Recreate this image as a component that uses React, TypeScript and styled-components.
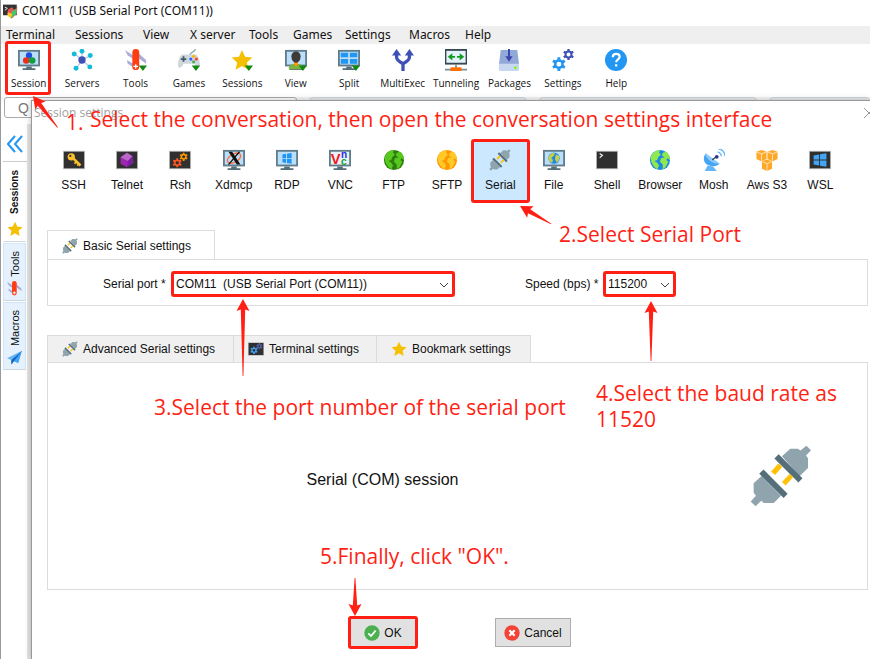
import React from "react";
import styled, { createGlobalStyle, css } from "styled-components";

const RED = "#ff1f14";
const ARIAL = '"Liberation Sans", Arial, sans-serif';
const HUMANIST = '"Noto Sans", "Open Sans", sans-serif';
const OPEN = '"Open Sans", "Noto Sans", sans-serif';

const GlobalStyle = createGlobalStyle`
  *, *::before, *::after { box-sizing: border-box; }
  body { margin: 0; background: #fff; color: #111; font: 12px/16px ${ARIAL}; }
  button, input, select { font: inherit; color: inherit; margin: 0; }
`;

/* ---------- icons ---------- */

type Size = { size?: number };

const Svg = ({ size = 22, box = "0 0 24 24", children }: Size & { box?: string; children: React.ReactNode }) => (
  <svg width={size} height={size} viewBox={box} aria-hidden="true">{children}</svg>
);

const Monitor = ({ children, size, screen = "#bbdefb" }: Size & { children?: React.ReactNode; screen?: string }) => (
  <Svg size={size}>
    <path d="M0 1h24v18H0z" fill="#607d8b" />
    <path d="M2 3h20v14H2z" fill={screen} />
    <path d="M9 19h6v2h4v2H5v-2h4z" fill="#546e7a" />
    {children}
  </Svg>
);

const DarkScreen = ({ children, size }: Size & { children?: React.ReactNode }) => (
  <Svg size={size}>
    <path d="M0 2h24v20H0z" fill="#b8b8b8" />
    <path d="M1 3h22v18H1z" fill="#303030" />
    {children}
  </Svg>
);

const Dropdown = () => <path d="M15 18h9l-4.5 6z" fill="#108a10" />;

const STAR = "M12 1l3.3 7.4 8 .8-6 5.4 1.7 8L12 18.500 5 22.600l1.700-8-6-5.400 8-.8z";
const Star = ({ size, menu }: Size & { menu?: boolean }) => (
  <Svg size={size}><path d={STAR} fill="#f5c000" />{menu && <Dropdown />}</Svg>
);

const gearTeeth = [0, 60, 120];
const Gear = ({ x, y, r, color }: { x: number; y: number; r: number; color: string }) => (
  <g transform={`translate(${x} ${y})`}>
    <circle r={r * 0.54} fill="none" stroke={color} strokeWidth={r * 0.36} />
    {gearTeeth.map((a) => (
      <path key={a} transform={`rotate(${a})`} d={`M0 ${-r}V${-r * 0.62}M0 ${r}V${r * 0.62}`} stroke={color} strokeWidth={r * 0.42} />
    ))}
  </g>
);

const SessionIcon = () => (
  <Monitor>
    <circle cx="12" cy="7" r="3.400" fill="#1e4fe0" />
    <circle cx="9" cy="12.500" r="3.600" fill="#e8301c" />
    <circle cx="15.500" cy="12.500" r="3.600" fill="#10a040" />
  </Monitor>
);
const ServersIcon = () => (
  <Svg>
    <path d="M12 12L4 5M12 12V2M12 12l9-5M12 12l8 7M12 12l-6 9" stroke="#a9c6e8" strokeWidth="1.300" />
    <circle cx="12" cy="12" r="4" fill="#3f51b5" />
    {[[3.5, 5.5], [12, 2.5], [21, 7], [20.5, 19.5], [5.5, 21]].map(([x, y]) => (
      <circle key={`${x}-${y}`} cx={x} cy={y} r="2.700" fill="#10bcd8" />
    ))}
  </Svg>
);
const KnifeIcon = ({ size, menu }: Size & { menu?: boolean }) => (
  <Svg size={size}>
    <path d="M0 1l9 6v4L3 7zM2 12l7 4v4l-6-4zM15 5l8 7v4l-8-6z" fill="#a9add8" />
    <rect x="8" y="0" width="7.500" height="23" rx="3.700" fill="#ff3d12" />
    <path d="M11.700 16.500v5M9.200 19h5" stroke="#fff" strokeWidth="1.500" />
    {menu && <Dropdown />}
  </Svg>
);
const GamesIcon = () => (
  <Svg>
    <path d="M13 7C13 3 18 4 19 0" fill="none" stroke="#90a4ae" strokeWidth="1.400" />
    <path d="M5 6h14c3 0 5 7 5 12 0 4-4 3-6-2H6c-2 5-6 6-6 2C0 13 2 6 5 6z" fill="#cfd8dc" />
    <path d="M6 8v6M3 11h6" stroke="#455a64" strokeWidth="2" />
    <circle cx="17" cy="8" r="1.700" fill="#ffb300" /><circle cx="14" cy="11" r="1.700" fill="#2962ff" />
    <circle cx="20" cy="11" r="1.700" fill="#f44336" /><circle cx="17" cy="14" r="1.700" fill="#4caf50" />
    <Dropdown />
  </Svg>
);
const ViewIcon = () => (
  <Monitor>
    <path d="M4 22c0-5 4-6 8-6s8 1 8 6z" fill="#7cb342" />
    <path d="M10 14h4v3l-2 2-2-2z" fill="#ff9800" />
    <path d="M7 8c0-7 10-7 10 0 0 4-2 7-5 7s-5-3-5-7z" fill="#3e3a38" />
    <Dropdown />
  </Monitor>
);
const SplitIcon = () => (
  <Monitor>
    <path d="M3 4h8v5H3zM13 4h8v5h-8zM3 11h8v5H3zM13 11h8v5h-8z" fill="#2196f3" />
    <Dropdown />
  </Monitor>
);
const MultiExecIcon = () => (
  <Svg>
    <path d="M12 24v-9M5 5v4c0 3 3 5 7 7 4-2 7-4 7-7V5" fill="none" stroke="#3f51b5" strokeWidth="3.600" />
    <path d="M0 7l5-7 5 7zM14 7l5-7 5 7z" fill="#3f51b5" />
  </Svg>
);
const TunnelingIcon = () => (
  <Svg>
    <path d="M0 0h24v17H0z" fill="#37474f" /><path d="M1.500 2h21v13h-21z" fill="#e3f2fd" />
    <path d="M3 8.500l5-4v3h3v2H8v3zM21 8.500l-5-4v3h-3v2h3v3z" fill="#149a22" />
    <path d="M12 17v4M0 22.500h24" stroke="#78909c" strokeWidth="1.800" /><path d="M6 20h12v4H6z" fill="#ff6f00" />
  </Svg>
);
const PackagesIcon = () => (
  <Svg>
    <path d="M3 1h18l2 16H1z" fill="#92a8d8" /><path d="M1 16h22v6q0 2-2 2H3q-2 0-2-2z" fill="#c8d8f0" />
    <path d="M12 0v10" stroke="#3949ab" strokeWidth="2.200" /><path d="M8 8h8l-4 6z" fill="#3949ab" />
    <circle cx="19" cy="20.500" r="1.500" fill="#76ff03" />
  </Svg>
);
const SettingsIcon = () => (
  <Svg><Gear x={7.5} y={16.500} r={7.500} color="#2196f3" /><Gear x={18} y={6} r={6} color="#3f51b5" /></Svg>
);
const HelpIcon = () => (
  <Svg>
    <circle cx="12" cy="12" r="12" fill="#2196f3" />
    <path d="M8.500 9c0-5 7.500-4.500 7.500-.5 0 3-3.800 2.500-3.800 6M12.200 16.500v2.500" fill="none" stroke="#fff" strokeWidth="2.400" />
  </Svg>
);
const Plug = ({ size }: Size) => (
  <Svg size={size} box="60 46 188 188">
    <path d="M182 57h23l8 6 18-15 14 14-15 16 6 8v30l-26 25-53-61z" fill="#90a4ae" />
    <path d="M95 140l59 60-22 22h-30l-8-7-17 17-15-15 16-17-7-10v-28z" fill="#90a4ae" />
    <path d="M147 74l72 73-12 13-73-73zM101 120l73 74-12 13-74-74z" fill="#546e7a" />
    <path d="M146 102l12 10-22 25-12-11zM180 134l11 9-23 26-11-11z" fill="#ffc107" />
  </Svg>
);
const SshIcon = () => (
  <DarkScreen>
    <circle cx="9" cy="8.500" r="4" fill="#fbc02d" /><circle cx="8" cy="7.500" r="1.200" fill="#303030" />
    <path d="M11 10l8 8" stroke="#fbc02d" strokeWidth="2.800" />
    <path d="M14.500 14l-2 2M17 16.500l-1.500 1.500" stroke="#fbc02d" strokeWidth="1.800" />
  </DarkScreen>
);
const TelnetIcon = () => (
  <DarkScreen>
    <path d="M12 4l6 4 1 7-7 5-7-4V9z" fill="#9c27b0" /><path d="M12 4l6 4-5 5-8-4z" fill="#ba68c8" /><path d="M13 13l5-5 1 7-7 5z" fill="#7b1fa2" />
  </DarkScreen>
);
const RshIcon = () => (
  <DarkScreen><Gear x={9} y={15} r={5} color="#ff5722" /><Gear x={16} y={8.500} r={4.500} color="#ff9800" /></DarkScreen>
);
const TerminalIcon = ({ size }: Size) => (
  <DarkScreen size={size}><Gear x={9} y={14} r={5.500} color="#42a5f5" /><Gear x={17} y={8} r={4.500} color="#5c6bc0" /></DarkScreen>
);
const XdmcpIcon = () => (
  <Monitor>
    <ellipse cx="12" cy="10" rx="8" ry="4.500" transform="rotate(-30 12 10)" fill="none" stroke="#ff6d3a" strokeWidth="1.500" />
    <path d="M6 3h4l9 14h-4z" fill="#111" /><path d="M18 3L6 17" stroke="#111" strokeWidth="1.400" />
  </Monitor>
);
const WIN = "M7 6l4-.7v4.500H7zM12 5.200l5-.8v5.400h-5zM7 10.700h4v4.500l-4-.7zM12 10.700h5v5.400l-5-.8z";
const RdpIcon = () => <Monitor><path d={WIN} fill="#1e96f5" /></Monitor>;
const WslIcon = () => (
  <DarkScreen><path d="M5 7l6-1v5.500H5zM12 5.800l7-1.200v6.900h-7zM5 12.500h6V18l-6-1zM12 12.500h7v6.900l-7-1.200z" fill="#42a5f5" /></DarkScreen>
);
const VncIcon = () => (
  <Monitor screen="#e8f1f8">
    <g fontFamily={ARIAL} fontWeight="bold">
      <text x="2" y="16" fontSize="16" fill="#f01818">V</text>
      <text x="13" y="10" fontSize="11" fill="#2330e0">n</text>
      <text x="13" y="17" fontSize="11" fill="#12a030">c</text>
    </g>
  </Monitor>
);
const Globe = ({ sea, land }: { sea: string; land: string }) => (
  <Svg>
    <circle cx="12" cy="12" r="11" fill={sea} />
    <path d="M3 6c3-4 6-5 9-5l-1 3 2 2-3 3-1 3-3 1 3 2 2 3-2 4C4 19 0 12 3 6zM15 4l4-1c3 3 4 6 4 9l-3-2-1 2 2 2-3 6-3 2v-5l-3-3 1-4 4-1-3-2z" fill={land} />
  </Svg>
);
const FileIcon = () => (
  <Monitor>
    <circle cx="12" cy="10" r="6.200" fill="#1e88e5" />
    <path d="M7 7c2-3 5-3 6-3l-1 3-3 3 2 2-1 3c-4-1-5-5-3-8zM14 6l3 1c2 3 0 6-2 8l-2-4z" fill="#c6d04a" />
  </Monitor>
);
const ShellIcon = () => (
  <DarkScreen><path d="M4 5l3 2-3 2.500" fill="none" stroke="#eee" strokeWidth="1.300" /></DarkScreen>
);
const MoshIcon = () => (
  <Svg>
    <path d="M3 5c-4 5-2 12 4 13 5 2 9 0 11-2z" fill="#42a5f5" /><path d="M3 5l15 11c-2 0-6 0-10-3S2 7 3 5z" fill="#90caf9" />
    <path d="M5 18l-3 6h13l-4-5z" fill="#64b5f6" /><path d="M10 12l5-4" stroke="#37474f" strokeWidth="1.500" />
    <circle cx="15" cy="8.500" r="2" fill="#283593" />
    <path d="M16 3.500c2 0 4 2 4 4.500M17 0c4 0 7 4 7 8" fill="none" stroke="#64b5f6" strokeWidth="1.400" />
  </Svg>
);
const Cube = ({ x, y }: { x: number; y: number }) => (
  <g transform={`translate(${x} ${y})`}>
    <path d="M0-6l5.500 2v8L0 6.500-5.500 4v-8z" fill="#ffa726" />
    <path d="M-5.500-4L0-1.500 5.500-4M0-1.500V6.500" fill="none" stroke="#ffe0b2" strokeWidth="1.100" />
  </g>
);
const AwsIcon = () => <Svg><Cube x={6} y={7} /><Cube x={18} y={7} /><Cube x={12} y={17.500} /></Svg>;
const PlaneIcon = ({ size }: Size) => (
  <Svg size={size}><path d="M24 1L0 13l7 3z" fill="#64b5f6" /><path d="M24 1L7 16v7l4-5 7 3z" fill="#42a5f5" /><path d="M24 1L7 16v7z" fill="#1565c0" /></Svg>
);
const LogoIcon = () => (
  <Svg size={15}>
    <path d="M0 1h22v17H0z" fill="#333" /><path d="M3 5l4 2-4 3" fill="none" stroke="#eee" strokeWidth="1.500" />
    <path d="M8 9l6-4 4 4 5-4-1 10-8 8-7-8z" fill="#ef5350" /><path d="M14 12l8-5-1 9-8 7z" fill="#43c86c" /><path d="M8 13l7 3-3 7-5-5z" fill="#ffca28" />
  </Svg>
);
const CheckIcon = () => (
  <Svg size={16}><circle cx="12" cy="12" r="11.500" fill="#4caf50" /><path d="M6.500 12.500l4 4 7-8" fill="none" stroke="#fff" strokeWidth="2.600" /></Svg>
);
const CrossIcon = () => (
  <Svg size={16}><circle cx="12" cy="12" r="11.500" fill="#f44336" /><path d="M8 8l8 8M16 8l-8 8" stroke="#fff" strokeWidth="3.200" /></Svg>
);

/* ---------- main window ---------- */

const Window = styled.div`
  position: relative;
  display: flex;
  flex-direction: column;
  min-height: 100vh;
  overflow: hidden;
  border-left: 1px solid #9a9a9a;
`;
const TitleBar = styled.header`
  display: flex;
  align-items: center;
  gap: 4px;
  height: 26px;
  padding: 0 2px 4px;
  font: 12px/16px ${HUMANIST};
`;
const MenuBar = styled.nav`
  display: flex;
  height: 18px;
  padding-left: 5px;
  background: #efefef;
`;
const MenuItem = styled.button<{ $width: number }>`
  width: ${(p) => p.$width}px;
  padding: 0;
  border: 0;
  background: none;
  text-align: left;
  white-space: nowrap;
  font: 12px/16px ${HUMANIST};
`;
const Toolbar = styled.div`
  display: grid;
  grid-template-columns: repeat(12, 1fr);
  width: 642px;
  height: 53px;
  padding: 5px 0 0 1px;
`;
const marked = css`
  &::after {
    content: "";
    position: absolute;
    inset: var(--mark-inset);
    border: 3px solid ${RED};
    border-radius: 3px;
    pointer-events: none;
  }
`;
const ToolButton = styled.button<{ $marked?: boolean }>`
  position: relative;
  display: flex;
  flex-direction: column;
  align-items: center;
  gap: 4px;
  padding: 0;
  border: 0;
  background: none;
  white-space: nowrap;
  font: 10px/16px ${OPEN};
  --mark-inset: -8px 4px 2px 3px;
  ${(p) => p.$marked && marked}
`;
const QuickRow = styled.div`
  display: grid;
  grid-template-columns: 293px 218px 218px 1fr;
  gap: 12px;
  height: 27px;
  padding-left: 3px;
  background: linear-gradient(#f4f4f4, #fff 8px);
`;
const QuickInput = styled.input`
  height: 21px;
  padding: 0 13px;
  border: 1px solid #aaa;
  border-radius: 3px;
  background: #fff;
  font: 14px/18px ${ARIAL};
  color: #777;
`;
const PageTab = styled.div`
  border: 1px solid #cfd5da;
  border-radius: 4px 4px 0 0;
  background: #e8ebee;
`;
const SideBar = styled.aside`
  display: flex;
  flex: 1;
  flex-direction: column;
  gap: 1px;
  width: 30px;
  padding: 0 4px 0 2px;
  background: linear-gradient(90deg, #fff 26px, #e4e4e4 26px);
`;
const Collapse = styled.button`
  height: 38px;
  padding: 6px 0 0;
  border: 0;
  border-bottom: 1px solid #ccc;
  background: none;
`;
const SideTab = styled.button<{ $active?: boolean }>`
  display: flex;
  flex-direction: column;
  align-items: center;
  gap: ${(p) => (p.$active ? 7 : 4)}px;
  width: 23px;
  padding: ${(p) => (p.$active ? 6 : 7)}px 0 4px;
  border: 1px solid ${(p) => (p.$active ? "#fff" : "#d3e6f5")};
  border-bottom-color: #ccd6de;
  background: ${(p) => (p.$active ? "#fff" : "#e5f2fd")};
  font: ${(p) => (p.$active ? "bold 10px" : "11px")}/14px ${ARIAL};
  span { writing-mode: vertical-rl; transform: rotate(180deg); }
`;

/* ---------- dialog ---------- */

const Dialog = styled.section`
  position: absolute;
  inset: 100px 0 0 30px;
  display: flex;
  flex-direction: column;
  padding: 0 2px 10px 15px;
  border: solid #999;
  border-width: 1px 0 0 1px;
  background: #fff;
  box-shadow: 0 0 6px rgba(0, 0, 0, 0.25);
`;
const DialogTitle = styled.header`
  display: flex;
  align-items: center;
  justify-content: space-between;
  height: 24px;
  margin: 0 -6px 0 -13px;
  color: #a0a0a0;
  font: 12px/16px ${OPEN};
`;
const CloseButton = styled.button`
  display: flex;
  padding: 0;
  border: 0;
  background: none;
`;
const SessionTypes = styled.div`
  display: grid;
  grid-template-columns: repeat(15, 1fr);
  width: 800px;
  height: 60px;
  margin-top: 16px;
`;
const SessionType = styled.button<{ $marked?: boolean }>`
  position: relative;
  display: flex;
  flex-direction: column;
  align-items: center;
  gap: 6px;
  padding: 8px 0 0;
  border: 0;
  background: ${(p) => (p.$marked ? "#cce8ff" : "none")};
  white-space: nowrap;
  --mark-inset: -2px -3px;
  ${(p) => p.$marked && marked}
`;
const TabRow = styled.div<{ $top: number }>`
  display: flex;
  margin-top: ${(p) => p.$top}px;
`;
const Tab = styled.button<{ $width: number; $active?: boolean }>`
  display: flex;
  align-items: center;
  gap: 5px;
  width: ${(p) => p.$width}px;
  height: ${(p) => (p.$active ? 30 : 27)}px;
  margin-bottom: ${(p) => (p.$active ? -1 : 0)}px;
  padding: 0 0 0 14px;
  border: 1px solid #dcdcdc;
  border-bottom: 0;
  background: ${(p) => (p.$active ? "#fff" : "#f0f0f0")};
  white-space: nowrap;
  & + & { border-left: 0; }
`;
const FieldPanel = styled.div`
  display: flex;
  align-items: center;
  height: 47px;
  padding: 2px 0 0 55px;
  border: 1px solid #dcdcdc;
`;
const FieldLabel = styled.label<{ $width: number }>`
  width: ${(p) => p.$width}px;
  white-space: nowrap;
`;
const SelectFrame = styled.div<{ $width: number }>`
  position: relative;
  width: ${(p) => p.$width}px;
  margin-right: 70px;
  border: 3px solid ${RED};
  border-radius: 3px;
  svg { position: absolute; right: 3px; top: 8px; pointer-events: none; }
`;
const Select = styled.select`
  display: block;
  appearance: none;
  width: 100%;
  height: 20px;
  padding: 0 0 0 2px;
  border: 0;
  background: #fff;
`;
const SessionPanel = styled.div`
  display: grid;
  grid-template-columns: 1fr auto;
  align-items: center;
  min-height: 228px;
  border: 1px solid #dcdcdc;
`;
const SessionName = styled.p`
  margin: 8px 0 0;
  text-align: center;
  font: 16px/20px ${ARIAL};
`;
const BigPlug = styled.div`
  display: flex;
  margin: 0 55px 0 33px;
`;
const Footer = styled.footer`
  display: flex;
  justify-content: center;
  gap: 78px;
  margin-top: 28px;
  padding-left: 5px;
`;
const DialogButton = styled.button<{ $width: number; $marked?: boolean }>`
  position: relative;
  display: flex;
  align-items: center;
  justify-content: center;
  gap: 4px;
  width: ${(p) => p.$width}px;
  height: 29px;
  padding: 0;
  border: 1px solid #adadad;
  background: #e1e1e1;
  --mark-inset: -3px -2px;
  ${(p) => p.$marked && marked}
`;

/* ---------- callouts ---------- */

const Note = styled.p<{ $x: number; $y: number }>`
  position: absolute;
  left: ${(p) => p.$x}px;
  top: ${(p) => p.$y}px;
  margin: 0;
  color: ${RED};
  font: 21px/26px ${OPEN};
  white-space: pre;
`;
const ArrowLayer = styled.svg`
  position: absolute;
  inset: 0;
  width: 100%;
  height: 100%;
  pointer-events: none;
`;
const Arrow = ({ x, y, length, angle = 0 }: { x: number; y: number; length: number; angle?: number }) => (
  <path
    transform={`translate(${x} ${y}) rotate(${angle})`}
    d={`M0 0L6.500 12 2.200 10.500 .4 ${length}H-.4L-2.200 10.500-6.500 12z`}
    fill={RED}
  />
);

const menus: [string, number][] = [
  ["Terminal", 69], ["Sessions", 68], ["View", 47], ["X server", 59], ["Tools", 44],
  ["Games", 52], ["Settings", 64], ["Macros", 56], ["Help", 40],
];
const tools: [string, React.ReactNode][] = [
  ["Session", <SessionIcon />], ["Servers", <ServersIcon />], ["Tools", <KnifeIcon menu />],
  ["Games", <GamesIcon />], ["Sessions", <Star menu />], ["View", <ViewIcon />],
  ["Split", <SplitIcon />], ["MultiExec", <MultiExecIcon />], ["Tunneling", <TunnelingIcon />],
  ["Packages", <PackagesIcon />], ["Settings", <SettingsIcon />], ["Help", <HelpIcon />],
];
const types: [string, React.ReactNode][] = [
  ["SSH", <SshIcon />], ["Telnet", <TelnetIcon />], ["Rsh", <RshIcon />], ["Xdmcp", <XdmcpIcon />],
  ["RDP", <RdpIcon />], ["VNC", <VncIcon />], ["FTP", <Globe sea="#2e7d0f" land="#56c81e" />],
  ["SFTP", <Globe sea="#ff9800" land="#ffc928" />], ["Serial", <Plug size={22} />], ["File", <FileIcon />],
  ["Shell", <ShellIcon />], ["Browser", <Globe sea="#1e88e5" land="#8ee84e" />], ["Mosh", <MoshIcon />],
  ["Aws S3", <AwsIcon />], ["WSL", <WslIcon />],
];

const Chevron = () => (
  <svg width="10" height="6" viewBox="0 0 10 6" aria-hidden="true"><path d="M1 1l4 4 4-4" fill="none" stroke="#444" /></svg>
);

export default function App() {
  return (
    <>
      <GlobalStyle />
      <Window>
        <TitleBar><LogoIcon /><span>COM11 {"\u00a0"}(USB Serial Port (COM11))</span></TitleBar>
        <MenuBar>{menus.map(([name, width]) => <MenuItem key={name} $width={width}>{name}</MenuItem>)}</MenuBar>
        <Toolbar>
          {tools.map(([name, icon], i) => <ToolButton key={name} $marked={i === 0}>{icon}{name}</ToolButton>)}
        </Toolbar>
        <QuickRow>
          <QuickInput aria-label="Q" defaultValue="Q" />
          <PageTab /><PageTab /><PageTab />
        </QuickRow>
        <SideBar>
          <Collapse aria-label="Collapse">
            <svg width="16" height="18" viewBox="0 0 16 18"><path d="M8 1L1 9l7 8M15 1L8 9l7 8" fill="none" stroke="#2196f3" strokeWidth="2" /></svg>
          </Collapse>
          <SideTab $active><span>Sessions</span><Star size={16} /></SideTab>
          <SideTab><span>Tools</span><KnifeIcon size={15} /></SideTab>
          <SideTab><span>Macros</span><PlaneIcon size={15} /></SideTab>
        </SideBar>

        <Dialog role="dialog" aria-label="Session settings">
          <DialogTitle>
            <span>Session settings</span>
            <CloseButton aria-label="Close">
              <svg width="10" height="10" viewBox="0 0 10 10"><path d="M0 0l10 10M10 0L0 10" stroke="#999" /></svg>
            </CloseButton>
          </DialogTitle>
          <SessionTypes>
            {types.map(([name, icon]) => <SessionType key={name} $marked={name === "Serial"}>{icon}{name}</SessionType>)}
          </SessionTypes>

          <TabRow $top={29} role="tablist">
            <Tab role="tab" $active $width={168}><Plug size={16} />Basic Serial settings</Tab>
          </TabRow>
          <FieldPanel>
            <FieldLabel htmlFor="port" $width={68}>Serial port *</FieldLabel>
            <SelectFrame $width={284}>
              <Select id="port"><option>COM11 {"\u00a0"}(USB Serial Port (COM11))</option></Select><Chevron />
            </SelectFrame>
            <FieldLabel htmlFor="speed" $width={78}>Speed (bps) *</FieldLabel>
            <SelectFrame $width={73}><Select id="speed"><option>115200</option></Select><Chevron /></SelectFrame>
          </FieldPanel>

          <TabRow $top={29} role="tablist">
            <Tab role="tab" $width={187}><Plug size={16} />Advanced Serial settings</Tab>
            <Tab role="tab" $width={143}><TerminalIcon size={16} />Terminal settings</Tab>
            <Tab role="tab" $width={154}><Star size={16} />Bookmark settings</Tab>
          </TabRow>
          <SessionPanel>
            <SessionName>Serial (COM) session</SessionName>
            <BigPlug><Plug size={62} /></BigPlug>
          </SessionPanel>
          <Footer>
            <DialogButton $width={68} $marked><CheckIcon />OK</DialogButton>
            <DialogButton $width={76}><CrossIcon />Cancel</DialogButton>
          </Footer>
        </Dialog>

        <Note $x={65} $y={109}>1.</Note>
        <Note $x={89} $y={106}>Select the conversation, then open the conversation settings interface</Note>
        <Note $x={558} $y={221}>2.Select Serial Port</Note>
        <Note $x={153} $y={394}>3.Select the port number of the serial port</Note>
        <Note $x={595} $y={380}>{"4.Select the baud rate as\n11520"}</Note>
        <Note $x={319} $y={543}>5.Finally, click "OK".</Note>
        <ArrowLayer aria-hidden="true">
          <Arrow x={32} y={96} length={40} angle={-38} />
          <Arrow x={519} y={206} length={36} angle={-60} />
          <Arrow x={242} y={299} length={77} />
          <Arrow x={650} y={301} length={60} />
          <Arrow x={354} y={616} length={38} angle={180} />
        </ArrowLayer>
      </Window>
    </>
  );
}
